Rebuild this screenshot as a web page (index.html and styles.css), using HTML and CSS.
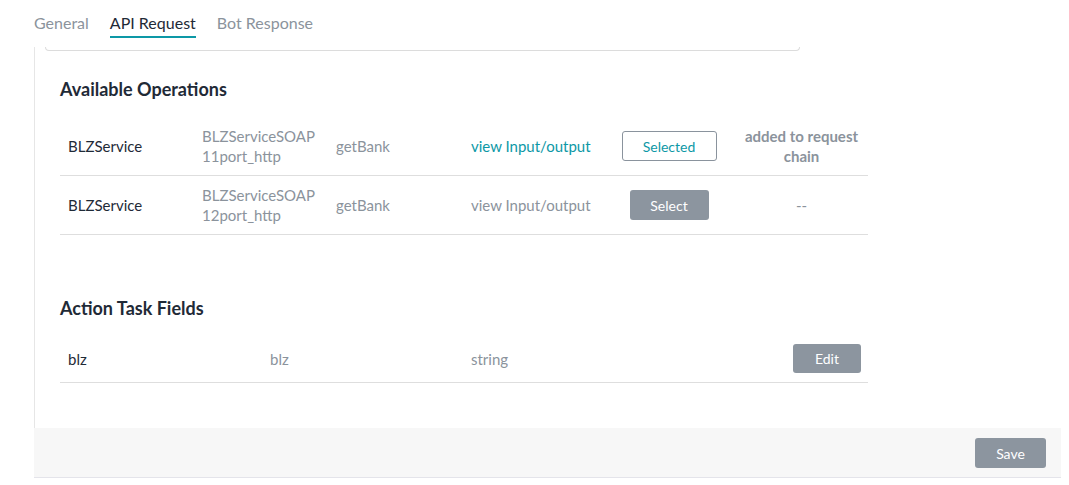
FILE: index.html
```html
<!DOCTYPE html>
<html>
<head>
<meta charset="utf-8">
<link rel="stylesheet" href="styles.css">
</head>
<body>
<nav class="tabs">
  <span class="tab">General</span>
  <span class="tab active">API Request</span>
  <span class="tab">Bot Response</span>
</nav>
<section class="panel">
  <div class="card-end"></div>
  <h2 class="heading">Available Operations</h2>
  <div class="ops">
    <div class="op-row">
      <div class="cell dark">BLZService</div>
      <div class="cell muted">BLZServiceSOAP<br>11port_http</div>
      <div class="cell muted">getBank</div>
      <div class="cell teal">view Input/output</div>
      <div class="cell center"><button class="btn outline">Selected</button></div>
      <div class="cell center status">added to request<br>chain</div>
    </div>
    <div class="op-row">
      <div class="cell dark">BLZService</div>
      <div class="cell muted">BLZServiceSOAP<br>12port_http</div>
      <div class="cell muted">getBank</div>
      <div class="cell muted">view Input/output</div>
      <div class="cell center"><button class="btn solid select">Select</button></div>
      <div class="cell center muted">--</div>
    </div>
  </div>
  <h2 class="heading second">Action Task Fields</h2>
  <div class="fields">
    <div class="field-row">
      <div class="cell dark">blz</div>
      <div class="cell muted">blz</div>
      <div class="cell muted">string</div>
      <div class="cell right"><button class="btn solid edit">Edit</button></div>
    </div>
  </div>
</section>
<footer class="footer">
  <button class="btn solid save">Save</button>
</footer>
</body>
</html>
```
FILE: styles.css
```css
* { box-sizing: border-box; }
body {
  margin: 0;
  font-family: Lato, "Open Sans", sans-serif;
  font-size: 15px;
  color: #1f2a37;
  background: #fff;
}
.tabs {
  display: flex;
  gap: 21px;
  padding-left: 34px;
  height: 38px;
}
.tab {
  padding-top: 13px;
  line-height: 20px;
  height: 38px;
  color: #8b939c;
  font-size: 16px;
}
.tab.active {
  color: #1f2a37;
  border-bottom: 2px solid #0d98a6;
}
.panel {
  margin-left: 34px;
  margin-top: 9px;
  border-left: 1px solid #e6e6e6;
  padding-left: 25px;
  padding-bottom: 45px;
}
.card-end {
  margin-left: -15px;
  width: 755px;
  height: 4px;
  border: 1px solid #dcdcdc;
  border-top: none;
  border-radius: 0 0 4px 4px;
}
.heading {
  margin: 26px 0 16px 0;
  font-size: 18px;
  line-height: 24px;
  font-weight: 700;
  color: #1f2a37;
}
.heading.second {
  margin-top: 61px;
  margin-bottom: 13px;
}
.ops, .fields { width: 808px; }
.op-row {
  display: grid;
  grid-template-columns: 134px 134px 135px 140px 132px 133px;
  align-items: center;
  height: 59px;
  border-bottom: 1px solid #dedede;
}
.field-row {
  display: grid;
  grid-template-columns: 202px 201px 1fr 120px;
  align-items: center;
  height: 50px;
  padding-top: 2px;
  border-bottom: 1px solid #dedede;
}
.cell {
  padding-left: 8px;
  line-height: 20px;
}
.dark { color: #1f2a37; }
.muted { color: #8b939c; }
.teal { color: #0d98a6; }
.center { text-align: center; padding-left: 0; }
.right { text-align: right; padding-right: 7px; }
.status {
  font-weight: 700;
  font-size: 15px;
  color: #8b939c;
}
.btn {
  font-family: Lato, "Open Sans", sans-serif;
  font-size: 14px;
  border-radius: 3px;
  cursor: pointer;
  line-height: 18px;
  padding-top: 2px;
}
.btn.outline {
  width: 95px;
  height: 30px;
  background: #fff;
  color: #0d98a6;
  border: 1px solid #8a939d;
}
.btn.solid {
  background: #8c959f;
  color: #fff;
  border: none;
  height: 29px;
}
.btn.select { width: 79px; height: 30px; }
.btn.edit { width: 68px; }
.btn.save { width: 71px; height: 30px; }
.footer {
  margin-left: 34px;
  width: 1027px;
  height: 50px;
  background: #f7f7f7;
  border-bottom: 1px solid #e4e4ea;
  display: flex;
  justify-content: flex-end;
  align-items: flex-start;
  padding: 10px 15px 0 0;
}
```
